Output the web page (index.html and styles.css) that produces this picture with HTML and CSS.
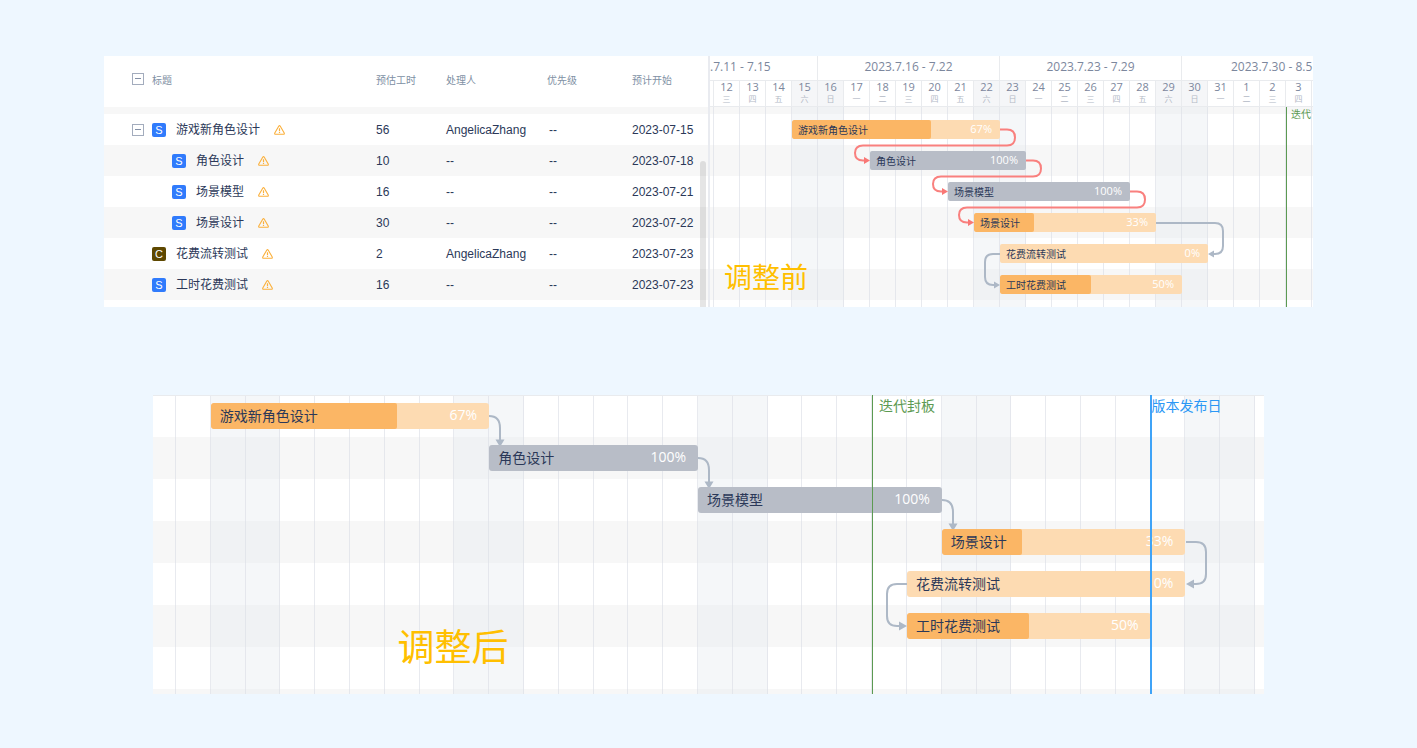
FILE: index.html
```html
<!DOCTYPE html>
<html lang="zh-CN">
<head>
<meta charset="utf-8">
<title>甘特图</title>
<link rel="stylesheet" href="styles.css">
</head>
<body>
<svg class="defs" aria-hidden="true">
  <symbol id="warn" viewBox="0 0 11 10">
    <path d="M4.7 1.2 Q5.5 .1 6.3 1.2 L10.2 7.9 Q10.7 9.2 9.4 9.3 H1.6 Q.3 9.2 .8 7.9 Z" fill="none" stroke="#fbb03b" stroke-width="1.1"/>
    <path d="M5.5 3.2 V6.2 M5.5 7 V8.1" stroke="#fbb03b" stroke-width="1.2"/>
  </symbol>
</svg>
<main class="page">
  <section class="panel before">
    <div class="list">
      <table class="tasks">
        <colgroup><col class="c-title"><col class="c-hours"><col class="c-owner"><col class="c-priority"><col class="c-start"></colgroup>
        <thead>
          <tr><th><div class="name"><button class="toggle" aria-label="全部收起"></button><span>标题</span></div></th><th>预估工时</th><th>处理人</th><th>优先级</th><th>预计开始</th></tr>
        </thead>
        <tbody>
          <tr class="strip"><td colspan="5"></td></tr>
          <tr><td><div class="name"><button class="toggle" aria-label="收起"></button><span class="tag">S</span><span class="title">游戏新角色设计</span><svg class="warn"><use href="#warn"/></svg></div></td><td>56</td><td>AngelicaZhang</td><td class="prio">--</td><td>2023-07-15</td></tr>
          <tr class="alt"><td><div class="name child"><span class="tag">S</span><span class="title">角色设计</span><svg class="warn"><use href="#warn"/></svg></div></td><td>10</td><td>--</td><td class="prio">--</td><td>2023-07-18</td></tr>
          <tr><td><div class="name child"><span class="tag">S</span><span class="title">场景模型</span><svg class="warn"><use href="#warn"/></svg></div></td><td>16</td><td>--</td><td class="prio">--</td><td>2023-07-21</td></tr>
          <tr class="alt"><td><div class="name child"><span class="tag">S</span><span class="title">场景设计</span><svg class="warn"><use href="#warn"/></svg></div></td><td>30</td><td>--</td><td class="prio">--</td><td>2023-07-22</td></tr>
          <tr><td><div class="name leaf"><span class="tag cost">C</span><span class="title">花费流转测试</span><svg class="warn"><use href="#warn"/></svg></div></td><td>2</td><td>AngelicaZhang</td><td class="prio">--</td><td>2023-07-23</td></tr>
          <tr class="alt"><td><div class="name leaf"><span class="tag">S</span><span class="title">工时花费测试</span><svg class="warn"><use href="#warn"/></svg></div></td><td>16</td><td>--</td><td class="prio">--</td><td>2023-07-23</td></tr>
        </tbody>
      </table>
      <div class="scrollbar"></div>
    </div>
    <div class="chart">
      <div class="weeks cols">
        <div class="week first">.7.11 - 7.15</div>
        <div class="week">2023.7.16 - 7.22</div>
        <div class="week">2023.7.23 - 7.29</div>
        <div class="week last">2023.7.30 - 8.5</div>
      </div>
      <div class="days cols">
        <div class="day"></div>
        <div class="day">12<small>三</small></div><div class="day">13<small>四</small></div><div class="day">14<small>五</small></div>
        <div class="day off">15<small>六</small></div><div class="day off">16<small>日</small></div>
        <div class="day">17<small>一</small></div><div class="day">18<small>二</small></div><div class="day">19<small>三</small></div><div class="day">20<small>四</small></div><div class="day">21<small>五</small></div>
        <div class="day off">22<small>六</small></div><div class="day off">23<small>日</small></div>
        <div class="day">24<small>一</small></div><div class="day">25<small>二</small></div><div class="day">26<small>三</small></div><div class="day">27<small>四</small></div><div class="day">28<small>五</small></div>
        <div class="day off">29<small>六</small></div><div class="day off">30<small>日</small></div>
        <div class="day">31<small>一</small></div><div class="day">1<small>二</small></div><div class="day">2<small>三</small></div><div class="day">3<small>四</small></div>
      </div>
      <div class="plot">
        <div class="layer stripes rows"><i></i><i></i><i></i><i></i><i></i><i></i><i></i><i></i></div>
        <div class="layer cols lines"><i></i><i></i><i></i><i></i><i class="off"></i><i class="off"></i><i></i><i></i><i></i><i></i><i></i><i class="off"></i><i class="off"></i><i></i><i></i><i></i><i></i><i></i><i class="off"></i><i class="off"></i><i></i><i></i><i></i><i></i></div>
        <div class="layer cols rows bars">
          <div class="bar r1"><div class="fill" style="width:67%"></div><span>游戏新角色设计</span><b>67%</b></div>
          <div class="bar r2 done"><span>角色设计</span><b>100%</b></div>
          <div class="bar r3 done"><span>场景模型</span><b>100%</b></div>
          <div class="bar r4"><div class="fill" style="width:33%"></div><span>场景设计</span><b>33%</b></div>
          <div class="bar r5"><span>花费流转测试</span><b>0%</b></div>
          <div class="bar r6"><div class="fill" style="width:50%"></div><span>工时花费测试</span><b>50%</b></div>
        </div>
        <svg class="layer links" viewBox="710 107 603 200" preserveAspectRatio="none" aria-hidden="true">
          <g class="late">
            <path d="M1000 129.5H1007Q1015 129.5 1015 137.5Q1015 145.5 1007 145.5H863Q855 145.5 855 153Q855 160.5 863 160.5H866"/>
            <path d="M1026 160.5H1033Q1041 160.5 1041 168.5Q1041 176.5 1033 176.5H941Q933 176.5 933 184Q933 191.5 941 191.5H944"/>
            <path d="M1130 191.5H1137Q1145 191.5 1145 199.5Q1145 207.5 1137 207.5H967Q959 207.5 959 215Q959 222.5 967 222.5H970"/>
            <path class="tip" d="M864 157L870 160.5L864 164ZM942 188L948 191.5L942 195ZM968 219L974 222.5L968 226Z"/>
          </g>
          <g class="ok">
            <path d="M1156 223H1215Q1223 223 1223 231V246Q1223 254 1215 254H1212"/>
            <path d="M1000 254H993Q985 254 985 262V277Q985 285 993 285H996"/>
            <path class="tip" d="M1214 250.5L1208 254L1214 257.5ZM994 281.5L1000 285L994 288.5Z"/>
          </g>
        </svg>
        <div class="layer cols marks"><div class="mark freeze">迭代</div></div>
      </div>
      <div class="caption">调整前</div>
    </div>
  </section>

  <section class="after">
    <div class="plot">
      <div class="layer stripes rows"><i></i><i></i><i></i><i></i><i></i><i></i><i></i><i></i></div>
      <div class="layer cols lines"><i></i><i></i><i class="off"></i><i class="off"></i><i></i><i></i><i></i><i></i><i></i><i class="off"></i><i class="off"></i><i></i><i></i><i></i><i></i><i></i><i class="off"></i><i class="off"></i><i></i><i></i><i></i><i></i><i></i><i class="off"></i><i class="off"></i><i></i><i></i><i></i><i></i><i></i><i class="off"></i><i class="off"></i></div>
      <div class="layer cols rows bars">
        <div class="bar r1"><div class="fill" style="width:67%"></div><span>游戏新角色设计</span><b>67%</b></div>
        <div class="bar r2 done"><span>角色设计</span><b>100%</b></div>
        <div class="bar r3 done"><span>场景模型</span><b>100%</b></div>
        <div class="bar r4"><div class="fill" style="width:33%"></div><span>场景设计</span><b>33%</b></div>
        <div class="bar r5"><span>花费流转测试</span><b>0%</b></div>
        <div class="bar r6"><div class="fill" style="width:50%"></div><span>工时花费测试</span><b>50%</b></div>
      </div>
      <svg class="layer links" viewBox="153 395 1111 299" preserveAspectRatio="none" aria-hidden="true">
        <g class="ok">
          <path d="M489 416Q500 416 500 428V440"/>
          <path d="M698 458Q709 458 709 470V482"/>
          <path d="M942 500Q953 500 953 512V524"/>
          <path d="M1186 542H1196Q1206 542 1206 552V574Q1206 584 1196 584H1190"/>
          <path d="M907 584H897Q887 584 887 594V616Q887 626 897 626H902"/>
          <path class="tip" d="M495.500 439.500H504.500L500 447ZM704.500 481.500H713.500L709 489ZM948.500 523.500H957.500L953 531ZM1194 579.500V588.500L1186 584ZM899 621.500V630.500L907 626Z"/>
        </g>
      </svg>
      <div class="layer cols marks"><div class="mark freeze">迭代封板</div><div class="mark release">版本发布日</div></div>
    </div>
    <div class="caption">调整后</div>
  </section>
</main>
</body>
</html>
```

FILE: styles.css
```css
* { box-sizing: border-box; }

body {
  margin: 0;
  background: #eef7ff;
  color: #2b3858;
  font-family: "Liberation Sans", "Noto Sans CJK SC", sans-serif;
  font-size: 12px;
}

.defs { display: none; }

.page {
  display: flex;
  flex-direction: column;
  gap: 88px;
  padding: 56px 0 54px;
}

.panel {
  display: flex;
  margin: 0 104px;
  background: #fff;
  overflow: hidden;
}

/* task list */

.list {
  position: relative;
  flex: none;
  padding-bottom: 7px;
  border-right: 2px solid #e9ebf0;
}

.tasks {
  width: 604px;
  table-layout: fixed;
  border-collapse: collapse;
}

.c-title { width: 272px; }
.c-hours { width: 70px; }
.c-owner { width: 101px; }
.c-priority { width: 85px; }

.tasks th {
  height: 51px;
  padding: 0 0 2px;
  color: #8090a4;
  font-size: 10px;
  font-weight: normal;
  line-height: 16px;
  text-align: left;
}

.tasks td {
  height: 31px;
  padding: 0;
  line-height: 16px;
}

.tasks .strip td { height: 7px; background: #f7f7f7; }
.tasks .alt { background: #f7f7f7; }
.tasks .prio { padding-left: 2px; }

.name {
  display: flex;
  align-items: center;
  gap: 8px;
  padding-left: 28px;
}

.tasks th .name { align-items: flex-start; }
.name.leaf { padding-left: 48px; }
.name.child { padding-left: 68px; }

.toggle {
  display: flex;
  align-items: center;
  justify-content: center;
  width: 12px;
  height: 12px;
  padding: 0;
  border: 1px solid #a3acbd;
  background: none;
}

.toggle::before {
  content: "";
  width: 6px;
  height: 1px;
  background: #8490a6;
}

.tag {
  width: 14px;
  height: 14px;
  border-radius: 2px;
  background: #307bfc;
  color: #fff;
  font-size: 11px;
  line-height: 14px;
  text-align: center;
}

.tag.cost { background: #5e4800; }
.title { margin: 0 6px 0 2px; }
.warn { width: 11px; height: 10px; }

.scrollbar {
  position: absolute;
  top: 105px;
  right: 2px;
  bottom: 0;
  width: 6px;
  border-radius: 3px 3px 0 0;
  background: rgba(0, 0, 0, .1);
}

/* chart */

.chart, .after { position: relative; }

.chart {
  flex: 1;
  display: flex;
  flex-direction: column;
  min-width: 0;
}

.cols { display: grid; }
.chart .cols { grid-template-columns: 4fr repeat(23, 26fr) 1fr; }
.after .cols { grid-template-columns: 23fr repeat(31, 35fr) 9fr; }

.weeks, .days {
  color: #7c879d;
  font-family: "Open Sans", "Noto Sans CJK SC", sans-serif;
}

.weeks { border-bottom: 1px solid #e9ebee; font-size: 12px; }

.week {
  display: flex;
  justify-content: center;
  grid-column: span 7;
  min-width: 0;
  height: 24px;
  border-right: 1px solid #e9ebee;
  line-height: 21px;
  white-space: nowrap;
}

.week.first { grid-column: 1 / 6; justify-content: flex-start; }
.week.last { grid-column: 20 / -1; justify-content: flex-start; padding-left: 49px; border: 0; }

.days { border-bottom: 1px solid #e9ebee; }

.day {
  display: flex;
  flex-direction: column;
  align-items: center;
  min-width: 0;
  height: 25px;
  border-right: 1px solid #e9ebee;
  font-size: 11px;
  line-height: 12px;
}

.day small { color: #b4bac6; font-size: 8px; line-height: 12px; }
.day.off { background: #f5f6f8; }

.plot { display: grid; flex: 1; overflow: hidden; }
.layer { grid-area: 1 / 1; min-width: 0; min-height: 0; }
.rows { display: grid; }
.chart .rows { grid-template-rows: 7px repeat(6, 31px) 7px; }
.after .rows { grid-template-rows: repeat(7, 42px) 5px; }

.chart .stripes i:nth-child(odd),
.after .stripes i:nth-child(even) { background: #f7f7f7; }
.lines i { border-right: 1px solid rgba(220, 223, 230, .65); }
.lines .off { background-color: rgba(225, 232, 238, .35); }

.after { margin: 0 153px; background: #fff; }
.after .lines { border-top: 1px solid #e9ebee; }

.bar {
  position: relative;
  display: flex;
  align-items: center;
  justify-content: space-between;
  align-self: center;
  height: 19px;
  padding: 0 8px 0 6px;
  border-radius: 2px;
  background: #fddbb2;
  font-size: 10px;
  overflow: hidden;
}

.bar.done { background: #b8bdc7; }
.bar span, .bar b { position: relative; }

.bar b {
  margin-bottom: 2px;
  color: #fff;
  font-family: "Open Sans", sans-serif;
  font-size: 11px;
  font-weight: normal;
}

.fill {
  position: absolute;
  inset: 0 auto 0 0;
  border-radius: 2px;
  background: #fbb665;
}

.after .bar {
  height: 26px;
  padding: 0 12px 2px 9px;
  border-radius: 3px;
  font-size: 14px;
}

.after .bar b { font-size: 14px; }

.chart .r1 { grid-area: 2 / 5 / 3 / 13; }
.chart .r2 { grid-area: 3 / 8 / 4 / 14; }
.chart .r3 { grid-area: 4 / 11 / 5 / 18; }
.chart .r4 { grid-area: 5 / 12 / 6 / 19; }
.chart .r5 { grid-area: 6 / 13 / 7 / 21; }
.chart .r6 { grid-area: 7 / 13 / 8 / 20; }

.after .r1 { grid-area: 1 / 3 / 2 / 11; }
.after .r2 { grid-area: 2 / 11 / 3 / 17; }
.after .r3 { grid-area: 3 / 17 / 4 / 24; }
.after .r4 { grid-area: 4 / 24 / 5 / 31; }
.after .r5 { grid-area: 5 / 23 / 6 / 31; }
.after .r6 { grid-area: 6 / 23 / 7 / 30; }

.links { width: 100%; height: 100%; }
.links path { fill: none; stroke-width: 2; vector-effect: non-scaling-stroke; }
.late path { stroke: #f9807e; }
.ok path { stroke: #adb8c6; }
.links .tip { stroke: none; }
.late .tip { fill: #f97775; }
.ok .tip { fill: #adb8c6; }

.marks { z-index: 1; }

.mark {
  grid-row: 1;
  min-width: 0;
  white-space: nowrap;
  border-left: 1px solid;
}

.chart .mark { grid-column: 24 / -1; padding-left: 4px; font-size: 10px; line-height: 16px; }
.after .mark { font-size: 14px; line-height: 22px; }
.freeze { color: #5c9a52; }
.after .freeze { grid-column: 22 / 25; padding-left: 6px; }
.release { grid-column: 30 / -1; margin-left: -1px; border-left-width: 2px; border-color: #3fa3f7; color: #2b98f5; }

.caption {
  position: absolute;
  color: #ffbf00;
  white-space: nowrap;
}

.chart .caption { left: 14px; bottom: 8px; font-size: 28px; line-height: 40px; }
.after .caption { left: 22%; bottom: 18px; font-size: 37px; line-height: 54px; }
```
